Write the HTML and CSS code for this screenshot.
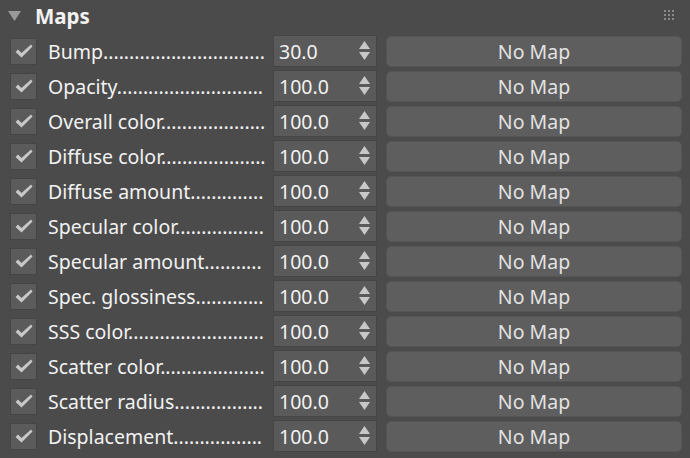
FILE: index.html
```html
<!DOCTYPE html>
<html>
<head>
<meta charset="utf-8">
<link rel="stylesheet" href="styles.css">
</head>
<body>
<div class="panel">
  <div class="header">
    <svg class="tri" width="13" height="10" viewBox="0 0 13 10"><polygon points="0,0 13,0 6.5,10" fill="#9a9a9a"/></svg>
    <span class="title">Maps</span>
    <svg class="grip" width="10" height="10" viewBox="0 0 10 10" fill="#8a8a8a">
      <rect x="0" y="0" width="2" height="2"/><rect x="4" y="0" width="2" height="2"/><rect x="8" y="0" width="2" height="2"/>
      <rect x="0" y="4" width="2" height="2"/><rect x="4" y="4" width="2" height="2"/><rect x="8" y="4" width="2" height="2"/>
      <rect x="0" y="8" width="2" height="2"/><rect x="4" y="8" width="2" height="2"/><rect x="8" y="8" width="2" height="2"/>
    </svg>
  </div>
  <div class="rows" id="rows"></div>
</div>
<script>
var items=[["Bump","30.0"],["Opacity","100.0"],["Overall color","100.0"],["Diffuse color","100.0"],["Diffuse amount","100.0"],["Specular color","100.0"],["Specular amount","100.0"],["Spec. glossiness","100.0"],["SSS color","100.0"],["Scatter color","100.0"],["Scatter radius","100.0"],["Displacement","100.0"]];
var html="";
items.forEach(function(it){
html+='<div class="row"><div class="check"><svg width="20" height="16" viewBox="0 0 20 16"><path d="M1.5 9 L4 6.5 L7.5 10 L17 1.5 L18.5 3.5 L7.5 14.5 Z" fill="#c8c8c8"/></svg></div>'+
'<div class="label"><span class="ltext">'+it[0]+'</span></div>'+
'<div class="field"><span class="num">'+it[1]+'</span><span class="spin"><svg width="11" height="20" viewBox="0 0 11 20"><polygon points="5.5,0 11,8 0,8" fill="#c8c8c8"/><polygon points="0,11 11,11 5.5,19" fill="#c8c8c8"/></svg></span></div>'+
'<div class="btn">No Map</div></div>';
});
document.getElementById("rows").innerHTML=html;
var labels=document.querySelectorAll(".label");
labels.forEach(function(l){
  var s=l.querySelector(".ltext");
  var max=l.clientWidth;
  var base=s.textContent;
  var n=0;
  while(n<80){
    s.textContent=base+".".repeat(n+1);
    if(s.getBoundingClientRect().width>max){break;}
    n++;
  }
  s.textContent=base+".".repeat(n);
});
</script>
</body>
</html>
```
FILE: styles.css
```css
html, body {
  margin: 0;
  padding: 0;
  background: #4b4b4b;
  width: 690px;
  height: 458px;
  overflow: hidden;
}
.panel {
  font-family: "Noto Sans", "Open Sans", sans-serif;
  color: #f2f2f2;
}
.header {
  height: 35px;
  display: flex;
  align-items: center;
  padding-left: 8px;
  padding-right: 16px;
  box-sizing: border-box;
}
.tri { margin-top: -3px; }
.title {
  font-weight: bold;
  font-size: 20.5px;
  margin-left: 14px;
  margin-top: -4px;
  flex: 1;
}
.grip { margin-top: -5px; }
.rows {
  display: flex;
  flex-direction: column;
  gap: 3px;
}
.row {
  height: 32px;
  display: flex;
  align-items: center;
  padding-left: 10px;
}
.check {
  width: 25px;
  height: 25px;
  background: #5b5b5b;
  border: 1px solid #454545;
  display: flex;
  align-items: center;
  justify-content: center;
}
.label {
  width: 218px;
  margin-left: 11px;
  font-size: 19.5px;
  white-space: nowrap;
  overflow: hidden;
}
.ltext { display: inline-block; }
.field {
  margin-left: 7px;
  width: 91px;
  height: 30px;
  background: #5a5a5a;
  border: 1px solid #454545;
  display: flex;
  align-items: center;
  justify-content: space-between;
  padding-left: 5px;
  padding-right: 6px;
}
.num {
  font-size: 19.5px;
}
.spin {
  display: flex;
  align-items: center;
}
.btn {
  margin-left: 9px;
  width: 294px;
  height: 29px;
  background: #5e5e5e;
  border: 1px solid #555555;
  border-radius: 5px;
  display: flex;
  align-items: center;
  justify-content: center;
  font-size: 19.5px;
  color: #e2e2e2;
}
```
